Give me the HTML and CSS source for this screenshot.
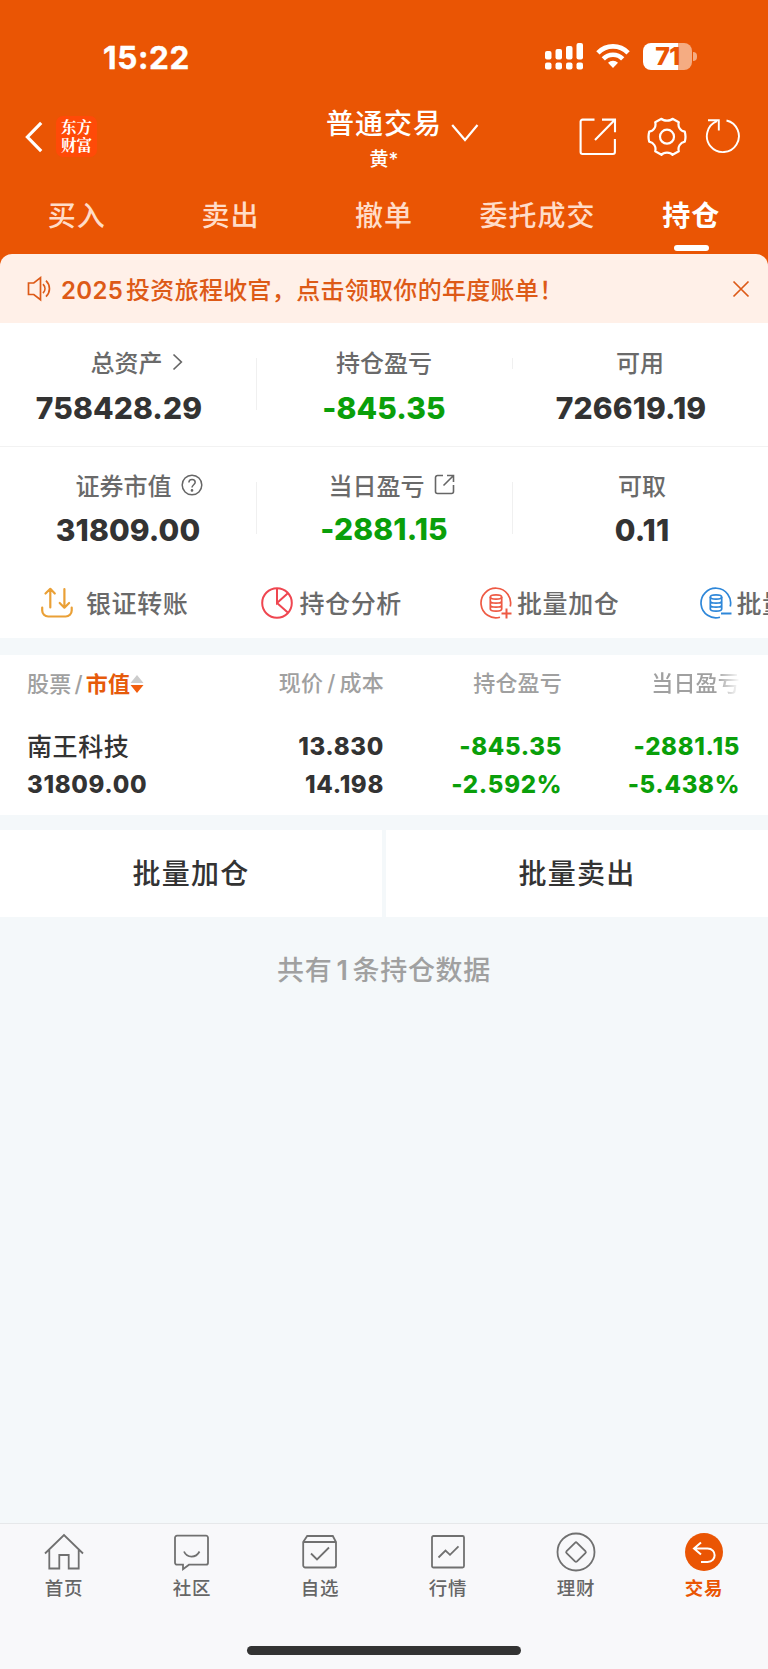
FILE: index.html
```html
<!DOCTYPE html>
<html lang="zh-CN">
<head>
    <meta charset="utf-8">
    <title>普通交易</title>
    <meta name="viewport" content="width=device-width, initial-scale=1">
    <link rel="stylesheet" href="styles.css">
</head>
<body>
<div class="page">
    <header class="header">
        <div class="status-bar">
            <div class="time">15:22</div>
            <svg class="signal" width="38" height="28" viewBox="0 0 38 28" fill="#fff">
                <rect x="0" y="8" width="6.5" height="8.5" rx="2"/><rect x="10.5" y="6" width="6.5" height="10.5" rx="2"/>
                <rect x="21" y="3" width="6.5" height="13.5" rx="2"/><rect x="31.5" y="0" width="6.5" height="16.5" rx="2"/>
                <rect x="0" y="19.5" width="6.5" height="7" rx="2"/><rect x="10.5" y="19.5" width="6.5" height="7" rx="2"/>
                <rect x="21" y="19.5" width="6.5" height="7" rx="2"/><rect x="31.5" y="19.5" width="6.5" height="7" rx="2"/>
            </svg>
            <svg class="wifi" width="34" height="26" viewBox="0 0 34 26" fill="none" stroke="#fff" stroke-width="4.6">
                <path d="M1.9 9.8C10.2 1.2 23.8 1.2 32.1 9.8"/>
                <path d="M7.3 15.8C12.6 10.4 21.4 10.4 26.7 15.8"/>
                <path d="M17 25l-5-5.2c2.7-2.9 7.3-2.9 10 0z" fill="#fff" stroke="none"/>
            </svg>
            <div class="battery">71</div>
            <div class="battery-tip"></div>
        </div>

        <div class="nav">
            <svg class="back" width="18" height="32" viewBox="0 0 18 32" fill="none" stroke="#fff" stroke-width="3.2">
                <path d="M16.2 1.8L2.4 16l13.8 14.2"/>
            </svg>
            <div class="logo">东方<br>财富</div>
            <div class="account">
                <div class="account-type">普通交易</div>
                <div class="account-name">黄*</div>
            </div>
            <svg class="chevron" width="28" height="18" viewBox="0 0 28 18" fill="none" stroke="#fff" stroke-width="2.2">
                <path d="M1.2 1L14 16 26.5 1"/>
            </svg>
            <svg class="share" width="38" height="38" viewBox="0 0 38 38" fill="none" stroke="#fff" stroke-width="2.1">
                <path d="M15.5 1.6H3.6a2 2 0 0 0-2 2V34a2 2 0 0 0 2 2h30.3a2 2 0 0 0 2-2V21M23 1.6h13V14.3M35.6 2L16 22"/>
            </svg>
            <svg class="gear" width="40" height="40" viewBox="0 0 40 40" fill="none" stroke="#fff" stroke-width="2.2" stroke-linejoin="round">
                <path d="M14.500 1.800C16.500 4.300 23.500 4.300 25.500 1.800L31.800 5.200C30.600 9.500 33 14 37.800 14.700Q39.200 20 37.800 24.700C33 25.600 30.600 30 31.800 34.200L25.500 37.800C23.500 35 16.500 35 14.500 37.800L8.200 34.200C9.400 30 7 25.600 2.200 24.700Q.8 20 2.200 14.700C7 14 9.400 9.500 8.200 5.200Z"/>
                <circle cx="20" cy="19.7" r="7"/>
            </svg>
            <svg class="refresh" width="36" height="36" viewBox="0 0 36 36" fill="none" stroke="#fff" stroke-width="1.9">
                <path d="M21.500 2.500A16 16 0 1 1 12 3.200M3 2.200h10.800V12.500"/>
            </svg>
        </div>

        <nav class="tabs">
            <div class="tab">买入</div>
            <div class="tab">卖出</div>
            <div class="tab">撤单</div>
            <div class="tab">委托成交</div>
            <div class="tab active">持仓</div>
        </nav>
    </header>

    <div class="banner">
        <svg width="26" height="26" viewBox="0 0 26 26" fill="none" stroke="#dd5a17" stroke-width="1.7">
            <path d="M1.500 7h5.300l6.700-5.300v22L6.800 18.500H1.500zM16 8.200c2.600 2.700 2.600 6.300 0 9M19 4.700c4.600 4.600 4.600 11.400 0 16"/>
        </svg>
        <div class="banner-text"><span class="year">2025</span>投资旅程收官，点击领取你的年度账单！</div>
        <svg class="close" width="18" height="18" viewBox="0 0 18 18" fill="none" stroke="#dd5a17" stroke-width="1.7">
            <path d="M1.500 1.500l15 15M16.500 1.500l-15 15"/>
        </svg>
    </div>

    <section class="summary">
        <div class="summary-row">
            <div class="cell total">
                <div class="label">总资产
                    <svg class="arrow" width="11" height="18" viewBox="0 0 11 18" fill="none" stroke="#666" stroke-width="1.7"><path d="M1.500 1.500L9.300 9l-7.800 7.500"/></svg>
                </div>
                <div class="value">758428.29</div>
            </div>
            <div class="cell">
                <div class="label">持仓盈亏</div>
                <div class="value green">-845.35</div>
            </div>
            <div class="cell available">
                <div class="label">可用</div>
                <div class="value">726619.19</div>
            </div>
        </div>
        <div class="summary-row second">
            <div class="cell">
                <div class="label market">证券市值
                    <svg width="22" height="22" viewBox="0 0 22 22" fill="none" stroke="#666" stroke-width="1.5">
                        <circle cx="11" cy="11" r="9.8"/><path d="M7.900 8.500c0-4.200 6.300-4 6.300-.2 0 2.400-3.200 2.500-3.200 5.200"/><circle cx="11" cy="16.4" r=".6" fill="#666"/>
                    </svg>
                </div>
                <div class="value">31809.00</div>
            </div>
            <div class="cell">
                <div class="label today">当日盈亏
                    <svg width="21" height="21" viewBox="0 0 21 21" fill="none" stroke="#666" stroke-width="1.6">
                        <path d="M9 1.500H3.500a2 2 0 0 0-2 2v14a2 2 0 0 0 2 2h14a2 2 0 0 0 2-2V11M13 1.500h6.500V8M19.300 1.700L9.500 11.500"/>
                    </svg>
                </div>
                <div class="value green raised">-2881.15</div>
            </div>
            <div class="cell withdraw">
                <div class="label">可取</div>
                <div class="value">0.11</div>
            </div>
        </div>
    </section>

    <section class="actions">
        <div class="action transfer">
            <svg width="32" height="32" viewBox="0 0 32 32" fill="none" stroke="#eaa036" stroke-width="2.2" stroke-linecap="round" stroke-linejoin="round">
                <path d="M9.300 20.500V2M4.500 6.500L9.300 1.800l4.500 4.700M23.400 2v18.500M18.700 16l4.700 4.700 4.700-4.700M1.200 20.500v3a6 6 0 0 0 6 6h17.500a6 6 0 0 0 6-6v-3"/>
            </svg>
            <span>银证转账</span>
        </div>
        <div class="action">
            <svg width="32" height="32" viewBox="0 0 32 32" fill="none" stroke="#ef4650" stroke-width="2">
                <circle cx="16" cy="16" r="14.8"/><path d="M16 1.200V16l10.800-9.800M16 16l10.800 9.500"/>
            </svg>
            <span>持仓分析</span>
        </div>
        <div class="action batch">
            <svg width="32" height="32" viewBox="0 0 32 32" fill="none" stroke="#ee5a44" stroke-width="1.7">
                <path d="M20 30.200A14.800 14.800 0 1 1 30.200 19.500"/><ellipse cx="16" cy="10" rx="5.7" ry="2.2"/>
                <path d="M10.300 10v12c0 2.800 11.400 2.800 11.400 0V10M10.300 14c0 2.800 11.400 2.800 11.400 0M10.300 18c0 2.800 11.400 2.800 11.400 0"/><path d="M21.500 26.500h10M26.500 21.500v10" stroke-width="2"/>
            </svg>
            <span>批量加仓</span>
        </div>
        <div class="action batch">
            <svg width="32" height="32" viewBox="0 0 32 32" fill="none" stroke="#2e87d9" stroke-width="1.7">
                <path d="M20 30.200A14.800 14.800 0 1 1 30.200 19.500"/><ellipse cx="16" cy="10" rx="5.7" ry="2.2"/>
                <path d="M10.300 10v12c0 2.800 11.400 2.800 11.400 0V10M10.300 14c0 2.800 11.400 2.800 11.400 0M10.300 18c0 2.800 11.400 2.800 11.400 0"/><path d="M21 26.500h10.500" stroke-width="2"/>
            </svg>
            <span>批量卖出</span>
        </div>
    </section>

    <section class="holdings">
        <div class="row head">
            <div class="col">股票<span class="slash">/</span><span class="sorted">市值</span><svg class="sort" width="14" height="20" viewBox="0 0 14 20"><path d="M7 1l6.500 8H.5z" fill="#ccc"/><path d="M7 19L.5 11h13z" fill="#f25d0d"/></svg></div>
            <div class="col">现价<span class="slash">/</span>成本</div>
            <div class="col">持仓盈亏</div>
            <div class="col fade">当日盈亏</div>
        </div>
        <div class="row stock">
            <div class="col"><div class="name">南王科技</div><div>31809.00</div></div>
            <div class="col"><div>13.830</div><div>14.198</div></div>
            <div class="col green"><div>-845.35</div><div>-2.592%</div></div>
            <div class="col green"><div>-2881.15</div><div>-5.438%</div></div>
        </div>
    </section>

    <div class="buttons">
        <div class="button">批量加仓</div>
        <div class="button">批量卖出</div>
    </div>
    <div class="count">共有<span class="number">1</span>条持仓数据</div>

    <footer class="bottom">
        <div class="menu">
            <div class="item">
                <svg width="40" height="40" viewBox="0 0 40 40"><path d="M1 21.500L20 3l19 18.500M5.300 18v18.500h10V23h9.400v13.500h10V18"/></svg>
                首页
            </div>
            <div class="item">
                <svg width="40" height="40" viewBox="0 0 40 40"><path d="M5 3.700h29a2 2 0 0 1 2 2v25a2 2 0 0 1-2 2H17l-6 4.600v-4.600H5a2 2 0 0 1-2-2v-25a2 2 0 0 1 2-2zM12 19.500c3 6.700 12 6.700 15.500 0"/></svg>
                社区
            </div>
            <div class="item">
                <svg width="40" height="40" viewBox="0 0 40 40"><path d="M3.200 10l4-6h25.600l3.200 6v23.500a2 2 0 0 1-2 2H5.200a2 2 0 0 1-2-2zM3.200 10H36M11 21.500l6 6L29 15.500"/></svg>
                自选
            </div>
            <div class="item">
                <svg width="40" height="40" viewBox="0 0 40 40"><rect x="4" y="4" width="32" height="31.5" rx="1.5"/><path d="M10.500 25.500l7-7 4.500 4.300 8.500-8.500"/></svg>
                行情
            </div>
            <div class="item">
                <svg width="40" height="40" viewBox="0 0 40 40"><circle cx="20" cy="20" r="18.5"/><path d="M19 10.800q1-1 2 0l8.400 8.300q1 1 0 2L21 29.400q-1 1-2 0l-8.400-8.300q-1-1 0-2z"/></svg>
                理财
            </div>
            <div class="item current">
                <svg width="40" height="40" viewBox="0 0 40 40"><circle cx="20" cy="20" r="19" fill="#ea5504" stroke="none"/><path d="M17 10.500l-7 6 7 6M10.500 16.500h13c9.500 0 9.500 13.500 0 13.500H17"/></svg>
                交易
            </div>
        </div>
        <div class="home-indicator"></div>
    </footer>
</div>
</body>
</html>
```
FILE: styles.css
```css
* {
    box-sizing: border-box;
}
body {
    margin: 0;
    background: #ea5504;
    font-family: Inter, "Noto Sans CJK SC", sans-serif;
    color: #333;
}
svg {
    flex: none;
    display: block;
}
.page {
    width: 768px;
    height: 1669px;
    display: flex;
    flex-direction: column;
    overflow: hidden;
}
.header {
    height: 254px;
    color: #fff;
}

/* status bar */
.status-bar {
    height: 100px;
    padding: 43px 0 0 103px;
    display: flex;
}
.time {
    width: 442px;
    font-size: 31.5px;
    line-height: 29px;
    font-weight: 700;
    letter-spacing: 0.6px;
    -webkit-text-stroke: 0.4px #fff;
}
.wifi {
    margin-left: 13px;
}
.battery {
    width: 49px;
    height: 27px;
    margin-left: 13px;
    border-radius: 8px;
    background: linear-gradient(to right, #fff 35px, #f5ac82 35px);
    color: #ea5504;
    font-size: 25px;
    line-height: 27px;
    font-weight: 800;
    letter-spacing: -0.5px;
    text-align: center;
}
.battery-tip {
    width: 4px;
    height: 9px;
    margin: 9px 0 0 1px;
    border-radius: 0 4px 4px 0;
    background: #f5ac82;
}

/* title and its buttons */
.nav {
    height: 88px;
    padding-left: 25px;
    display: flex;
    align-items: flex-start;
}
.back {
    margin-top: 21px;
}
.logo {
    width: 41px;
    height: 41px;
    margin: 16px 0 0 13px;
    padding-top: 2px;
    border-radius: 7px;
    background: #ff4a08;
    font-family: "Noto Serif CJK SC", "Noto Sans CJK SC", sans-serif;
    font-size: 15.5px;
    line-height: 17.5px;
    font-weight: 700;
    text-align: center;
}
.account {
    width: 118px;
    margin: 5px 0 0 228px;
    text-align: center;
}
.account-type {
    font-size: 28px;
    line-height: 38px;
    letter-spacing: 1px;
    font-weight: 500;
    white-space: nowrap;
}
.account-name {
    font-size: 19px;
    line-height: 34px;
    font-weight: 500;
}
.chevron {
    margin: 24px 0 0 8px;
}
.share {
    margin: 18px 0 0 100px;
}
.gear {
    margin: 17px 0 0 30px;
}
.refresh {
    margin: 18px 0 0 18px;
}
.tabs {
    display: grid;
    grid-template-columns: repeat(5, 1fr);
    height: 66px;
}
.tab {
    text-align: center;
    font-size: 28px;
    line-height: 56px;
    letter-spacing: 1px;
    font-weight: 500;
    color: #ffdcc8;
}
.tab.active {
    font-weight: 700;
    color: #fff;
}
.tab.active::after {
    content: "";
    display: block;
    width: 35px;
    height: 6px;
    margin: 1px auto 0;
    border-radius: 3px;
    background: #fff;
}

/* banner */
.banner {
    height: 69px;
    padding: 0 18px 0 27px;
    display: flex;
    align-items: center;
    border-radius: 12px 12px 0 0;
    background: #fff0e8;
    color: #dd5a17;
    font-size: 24px;
    font-weight: 500;
}
.banner-text {
    margin: -1px 0 0 8px;
    letter-spacing: 0.3px;
    white-space: nowrap;
}
.year {
    margin-right: 3px;
    font-weight: 600;
}
.close {
    margin-left: auto;
}

/* account summary */
.summary {
    background: #fff;
}
.summary-row {
    height: 124px;
    display: grid;
    grid-template-columns: repeat(3, 256px);
    border-bottom: 1px solid #f2f2f2;
}
.summary-row.second {
    height: 122px;
    border-bottom: none;
}
.cell {
    position: relative;
    padding-top: 20px;
    text-align: center;
}
.second .cell {
    padding-top: 19px;
}
.cell + .cell::before {
    content: "";
    position: absolute;
    left: 0;
    top: 35px;
    width: 1px;
    height: 52px;
    background: #f0f0f0;
}
.available.cell::before {
    height: 11px;
}
.label {
    display: flex;
    justify-content: center;
    align-items: center;
    gap: 9px;
    height: 36px;
    font-size: 24px;
    font-weight: 500;
    color: #6a6a6a;
}
.label svg {
    margin-top: 1px;
}
.value {
    font-size: 30px;
    line-height: 58px;
    font-weight: 800;
    letter-spacing: 0.1px;
}
.second .value {
    line-height: 57px;
}
.second .raised {
    line-height: 55px;
}
.green {
    color: #0a9f0a;
}
.total .label {
    padding-left: 17px;
}
.total .value {
    margin-left: -18px;
}
.available .value {
    margin-left: -18px;
}
.market {
    padding-left: 22px;
}
.today {
    padding-left: 15px;
}
.withdraw {
    padding-left: 4px;
}

/* quick actions */
.actions {
    height: 69px;
    padding-left: 41px;
    display: grid;
    grid-template-columns: repeat(4, 219.5px);
    background: #fff;
    overflow: hidden;
}
.action {
    display: flex;
    align-items: center;
    gap: 7px;
    font-size: 25px;
    font-weight: 500;
    letter-spacing: 0.6px;
    color: #6a6a6a;
    white-space: nowrap;
}
.action span {
    margin-top: -3px;
}
.action svg {
    margin-top: -2px;
}
.transfer {
    gap: 13px;
}
.batch {
    gap: 5px;
}

/* holdings */
.holdings {
    box-sizing: content-box;
    height: 160px;
    padding: 0 28px 0 27px;
    border-top: 17px solid #f4f8fa;
    background: #fff;
}
.row {
    display: grid;
    grid-template-columns: 160px 197px 178px 178px;
}
.head {
    height: 58px;
    font-size: 22px;
    line-height: 56px;
    letter-spacing: 0.2px;
    font-weight: 500;
    color: #a0a0a0;
}
.col {
    text-align: right;
    white-space: nowrap;
}
.col:first-child {
    text-align: left;
}
.head .col:first-child {
    display: flex;
    align-items: center;
}
.head .col:first-child .slash {
    margin: 0 3px;
}
.slash {
    margin: 0 4px;
}
.sorted {
    color: #e65a0a;
    font-weight: 700;
}
.fade {
    -webkit-mask-image: linear-gradient(to left, transparent, #000 24px);
    mask-image: linear-gradient(to left, transparent, #000 24px);
}
.stock {
    padding-top: 15px;
    font-size: 24px;
    line-height: 38px;
    font-weight: 800;
    letter-spacing: 0.65px;
}
.name {
    height: 38px;
    font-size: 25px;
    font-weight: 500;
    letter-spacing: 0.6px;
}

.buttons {
    display: grid;
    grid-template-columns: 1fr 1fr;
    gap: 4px;
    padding: 15px 0 0;
    background: #f4f8fa;
}
.button {
    height: 87px;
    background: #fff;
    text-align: center;
    font-size: 28px;
    line-height: 89px;
    letter-spacing: 1.2px;
    font-weight: 500;
}
.count {
    flex: 1;
    padding-top: 34px;
    background: #f4f8fa;
    color: #a0a0a0;
    font-size: 27px;
    font-weight: 500;
    line-height: 40px;
    letter-spacing: 0.7px;
    text-align: center;
}
.number {
    margin: 0 4px;
    font-weight: 600;
}

/* bottom menu */
.bottom {
    height: 146px;
    border-top: 1px solid #e6e8ea;
    background: #f8f8fa;
}
.menu {
    display: grid;
    grid-template-columns: repeat(6, 128px);
    height: 122px;
    padding-top: 8px;
}
.item {
    display: flex;
    flex-direction: column;
    align-items: center;
    font-size: 18.5px;
    line-height: 32px;
    letter-spacing: 0.8px;
    font-weight: 500;
    color: #666;
}
.item svg {
    fill: none;
    stroke: #707070;
    stroke-width: 1.8px;
}
.item.current {
    color: #ea5504;
    font-weight: 700;
}
.item.current path {
    stroke: #fff;
    stroke-width: 2px;
}
.home-indicator {
    width: 274px;
    height: 9px;
    margin: 0 auto;
    border-radius: 5px;
    background: #333;
}
```
